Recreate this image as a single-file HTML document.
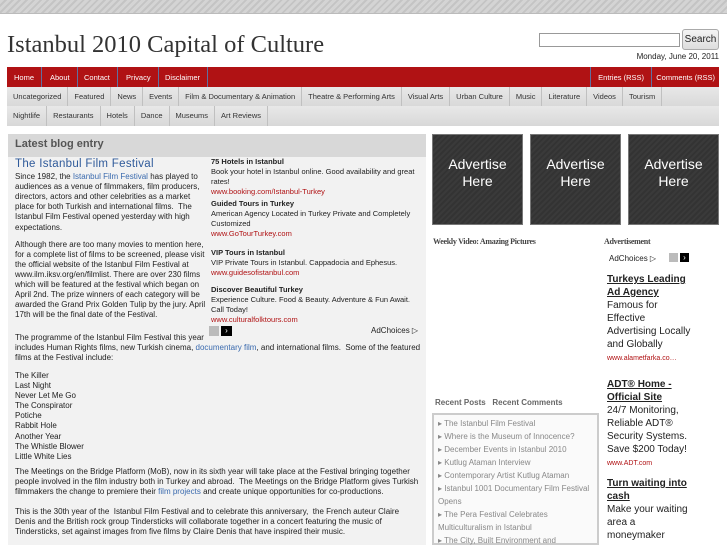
<!DOCTYPE html>
<html><head><meta charset="utf-8"><style>
*{margin:0;padding:0;box-sizing:border-box}
body{width:727px;height:545px;overflow:hidden;background:#fff;font-family:"Liberation Sans",sans-serif;color:#222;position:relative}
.abs{position:absolute}
.top{left:0;top:0;width:727px;height:14px;background:repeating-linear-gradient(135deg,#d4d4d4 0 3px,#c4c4c4 3px 5px);border-bottom:1px solid #bbb}
h1{position:absolute;left:7px;top:31px;font:24.5px "Liberation Serif",serif;color:#333;font-weight:normal}
.search{left:539px;top:33px;width:141px;height:14px;border:1px solid #999;background:#fff}
.btn{left:682px;top:29px;width:37px;height:21px;border:1px solid #aaa;border-radius:3px;background:linear-gradient(#f4f4f4,#ddd);font-size:10px;text-align:center;line-height:19px}
.date{right:8px;top:52px;font-size:8px;color:#222}
.red{left:7px;top:67px;width:712px;height:21px;background:#b01214;font-size:7.5px;color:#fff}
.red span{position:absolute;top:0;height:21px;line-height:21px;border-right:1px solid #6070a0;padding:0 7px}
.cat{left:7px;width:712px;height:20px;background:linear-gradient(#e8e8e8,#d8d8d8);font-size:7.5px;color:#333}
.cat span{display:inline-block;height:20px;line-height:20px;padding:0 6px;border-right:1px solid #c0c0c0;float:left}
.panel{left:8px;top:134px;width:418px;height:411px;background:#f2f2f2}
.ph{left:8px;top:134px;width:418px;height:23px;background:#d8d8d8;font-size:11px;font-weight:bold;color:#555;padding:4px 0 0 7px}
.post{left:15px;top:159px;width:192px;font-size:8px;line-height:10.1px;color:#222}
.post h2{font-size:11.5px;color:#2f5a9a;font-weight:normal;margin-bottom:3px;letter-spacing:.3px}
.post p{margin-bottom:7px}
.post a{color:#3a6aae}
.full{left:15px;width:405px;font-size:8px;line-height:10.1px}
.ads{left:211px;top:157px;width:212px;font-size:7.5px;line-height:10px;color:#222}
.ads b{display:block;font-size:7.5px;margin-top:2px}
.ads .u{color:#b01214}
.box{top:134px;width:91px;height:91px;background:repeating-linear-gradient(135deg,#3a3a3a 0 2px,#333 2px 4px);color:#fff;font-size:14px;text-align:center;padding-top:21px;line-height:17px;border:1px solid #777}
.wv{font:bold 8px "Liberation Serif",serif;color:#444;letter-spacing:-.3px}
.rp{left:432px;top:413px;width:167px;height:132px;border:2px solid #ccc;background:#fafafa;font-size:8px;line-height:13px;color:#888;padding:2px 4px}
.ad2{left:607px;font-size:10px;line-height:13px;color:#222}
.ad2 b{text-decoration:underline}
.ad2 .u{color:#b01214;font-size:7px}
</style></head><body>
<div class="abs top"></div>
<h1>Istanbul 2010 Capital of Culture</h1>
<div class="abs search"></div>
<div class="abs btn">Search</div>
<div class="abs date">Monday, June 20, 2011</div>
<div class="abs red">
<span style="left:0">Home</span><span style="left:36px">About</span><span style="left:70px">Contact</span><span style="left:112px">Privacy</span><span style="left:151px">Disclaimer</span>
<span style="right:67px;border-left:1px solid #6070a0">Entries (RSS)</span><span style="right:0;border:none;padding:0 4px 0 7px">Comments (RSS)</span>
</div>
<div class="abs cat" style="top:87px"><span>Uncategorized</span><span>Featured</span><span>News</span><span>Events</span><span>Film &amp; Documentary &amp; Animation</span><span>Theatre &amp; Performing Arts</span><span>Visual Arts</span><span>Urban Culture</span><span>Music</span><span>Literature</span><span>Videos</span><span>Tourism</span></div>
<div class="abs cat" style="top:106px"><span>Nightlife</span><span>Restaurants</span><span>Hotels</span><span>Dance</span><span>Museums</span><span>Art Reviews</span></div>
<div class="abs panel"></div>
<div class="abs ph">Latest blog entry</div>
<div class="abs post">
<h2>The Istanbul Film Festival</h2>
<p>Since 1982, the <a>Istanbul Film Festival</a> has played to audiences as a venue of filmmakers, film producers, directors, actors and other celebrities as a market place for both Turkish and international films.&nbsp; The Istanbul Film Festival opened yesterday with high expectations.</p>
<p>Although there are too many movies to mention here, for a complete list of films to be screened, please visit the official website of the Istanbul Film Festival at www.ilm.iksv.org/en/filmlist. There are over 230 films which will be featured at the festival which began on April 2nd. The prize winners of each category will be awarded the Grand Prix Golden Tulip by the jury. April 17th will be the final date of the Festival.</p>
</div>
<div class="abs full" style="top:333px;white-space:nowrap">The programme of the Istanbul Film Festival this year<br>includes Human Rights films, new Turkish cinema, <a style="color:#3a6aae">documentary film</a>, and international films.&nbsp; Some of the featured<br>films at the Festival include:</div>
<div class="abs full" style="top:371px">The Killer<br>Last Night<br>Never Let Me Go<br>The Conspirator<br>Potiche<br>Rabbit Hole<br>Another Year<br>The Whistle Blower<br>Little White Lies</div>
<div class="abs full" style="top:467px">The Meetings on the Bridge Platform (MoB), now in its sixth year will take place at the Festival bringing together people involved in the film industry both in Turkey and abroad.&nbsp; The Meetings on the Bridge Platform gives Turkish filmmakers the change to premiere their <a style="color:#3a6aae">film projects</a> and create unique opportunities for co-productions.</div>
<div class="abs full" style="top:507px">This is the 30th year of the&nbsp; Istanbul Film Festival and to celebrate this anniversary,&nbsp; the French auteur Claire Denis and the British rock group Tindersticks will collaborate together in a concert featuring the music of Tindersticks, set against images from five films by Claire Denis that have inspired their music.</div>
<div class="abs ads">
<b style="margin-top:0">75 Hotels in Istanbul</b>Book your hotel in Istanbul online. Good availability and great rates!<br><span class="u">www.booking.com/Istanbul-Turkey</span>
<b>Guided Tours in Turkey</b>American Agency Located in Turkey Private and Completely Customized<br><span class="u">www.GoTourTurkey.com</span>
<b style="margin-top:9px">VIP Tours in Istanbul</b>VIP Private Tours in Istanbul. Cappadocia and Ephesus.<br><span class="u">www.guidesofistanbul.com</span>
<b style="margin-top:7px">Discover Beautiful Turkey</b>Experience Culture. Food &amp; Beauty. Adventure &amp; Fun Await. Call Today!<br><span class="u">www.culturalfolktours.com</span>
</div>
<div class="abs" style="left:209px;top:326px;width:10px;height:10px;background:#bbb"></div>
<div class="abs" style="left:221px;top:326px;width:11px;height:10px;background:#000;color:#fff;font-size:8px;text-align:center;line-height:10px">›</div>
<div class="abs" style="left:371px;top:326px;font-size:8px">AdChoices ▷</div>
<div class="abs box" style="left:432px">Advertise<br>Here</div>
<div class="abs box" style="left:530px">Advertise<br>Here</div>
<div class="abs box" style="left:628px">Advertise<br>Here</div>
<div class="abs wv" style="left:433px;top:237px">Weekly Video: Amazing Pictures</div>
<div class="abs wv" style="left:604px;top:237px">Advertisement</div>
<div class="abs" style="left:609px;top:254px;font-size:8px">AdChoices ▷</div>
<div class="abs" style="left:669px;top:253px;width:9px;height:9px;background:#bbb"></div>
<div class="abs" style="left:680px;top:253px;width:9px;height:9px;background:#000;color:#fff;font-size:8px;text-align:center;line-height:9px">›</div>
<div class="abs ad2" style="top:273px"><b>Turkeys Leading<br>Ad Agency</b><br>Famous for<br>Effective<br>Advertising Locally<br>and Globally<br><span class="u">www.alametfarka.co…</span></div>
<div class="abs ad2" style="top:378px"><b>ADT® Home -<br>Official Site</b><br>24/7 Monitoring,<br>Reliable ADT®<br>Security Systems.<br>Save $200 Today!<br><span class="u">www.ADT.com</span></div>
<div class="abs ad2" style="top:477px"><b>Turn waiting into<br>cash</b><br>Make your waiting<br>area a<br>moneymaker</div>
<div class="abs" style="left:435px;top:398px;font-size:8px;font-weight:bold;color:#666">Recent Posts&nbsp;&nbsp; Recent Comments</div>
<div class="abs rp">▸ The Istanbul Film Festival<br>▸ Where is the Museum of Innocence?<br>▸ December Events in Istanbul 2010<br>▸ Kutlug Ataman Interview<br>▸ Contemporary Artist Kutlug Ataman<br>▸ Istanbul 1001 Documentary Film Festival<br>Opens<br>▸ The Pera Festival Celebrates<br>Multiculturalism in Istanbul<br>▸ The City, Built Environment and</div>
</body></html>
